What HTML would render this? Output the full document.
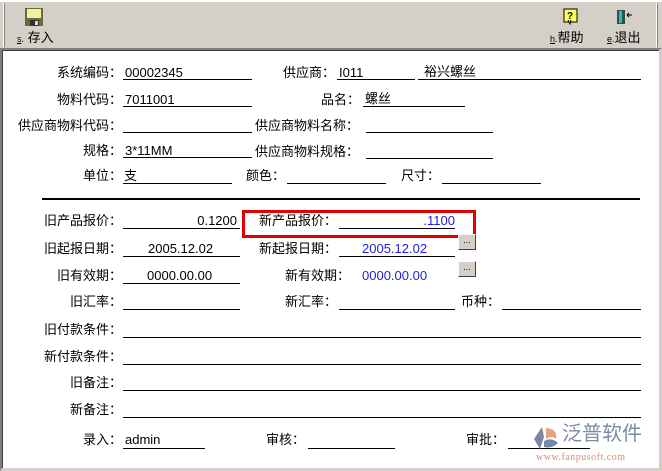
<!DOCTYPE html>
<html><head><meta charset="utf-8"><style>
*{margin:0;padding:0;box-sizing:border-box}
body{width:662px;height:471px;background:#d4d0c8;font:13px "Liberation Sans","Noto Sans CJK SC",sans-serif;color:#000;position:relative;overflow:hidden}
.a{position:absolute;white-space:nowrap;line-height:15px}
.l{position:absolute;height:1px;background:#000}
.b{color:#2020e0}
.btn{position:absolute;width:18px;height:16px;background:#d4d0c8;border:1px solid;border-color:#fff #404040 #404040 #fff;font-size:9px;text-align:center;line-height:10px}
</style></head><body>
<div style="position:absolute;left:0;top:0;width:662px;height:2px;background:#fff"></div>
<div style="position:absolute;left:3px;top:3px;width:2px;height:44px;border-left:1px solid #fff;border-right:1px solid #808080"></div>
<div style="position:absolute;left:656px;top:3px;width:2px;height:44px;border-left:1px solid #fff;border-right:1px solid #808080"></div>
<svg class="a" style="left:24px;top:7px" width="20" height="20"><rect x="1" y="1" width="18" height="18" fill="#6b6b3a"/><rect x="3" y="2" width="14" height="9" fill="#f0f0a0"/><rect x="6" y="13" width="9" height="6" fill="#333"/><rect x="11" y="14" width="3" height="4" fill="#ddd"/></svg>
<div class="a" style="left:17px;top:30px"><span style="font-size:9px;text-decoration:underline">s</span><span style="font-size:9px">.</span> 存入</div>
<svg class="a" style="left:563px;top:8px" width="16" height="18"><rect x="1" y="1" width="13" height="13" fill="#ffff60" stroke="#000"/><path d="M5 12l2 4 1-4" fill="#ffff60" stroke="#000"/><text x="4" y="11" font-size="10" font-weight="bold" fill="#000">?</text></svg>
<div class="a" style="left:550px;top:30px"><span style="font-size:9px;text-decoration:underline">h</span><span style="font-size:9px">.</span>帮助</div>
<svg class="a" style="left:616px;top:8px" width="18" height="18"><rect x="1" y="2" width="8" height="14" fill="#305050"/><rect x="3" y="3" width="3" height="12" fill="#20c0c0"/><path d="M11 7h5M11 7l2-2M11 7l2 2" stroke="#000"/></svg>
<div class="a" style="left:607px;top:30px"><span style="font-size:9px;text-decoration:underline">e</span><span style="font-size:9px">.</span>退出</div>
<div style="position:absolute;left:0;top:48px;width:662px;height:423px;background:#fff;border-top:2px solid #808080;border-left:2px solid #808080;border-bottom:3px solid #d4d0c8;border-right:3px solid #d4d0c8;box-shadow:inset 1px 1px 0 #404040"></div>

<div class="a" style="right:540px;top:65px">系统编码：</div><div class="a" style="left:125px;top:65px">00002345</div><div class="l" style="left:123px;top:79px;width:129px"></div>
<div class="a" style="right:327px;top:65px">供应商：</div><div class="a" style="left:339px;top:65px">I011</div><div class="l" style="left:337px;top:79px;width:78px"></div>
<div class="a" style="left:424px;top:64px">裕兴螺丝</div><div class="l" style="left:418px;top:79px;width:223px"></div>

<div class="a" style="right:540px;top:92px">物料代码：</div><div class="a" style="left:125px;top:92px">7011001</div><div class="l" style="left:123px;top:106px;width:129px"></div>
<div class="a" style="right:302px;top:92px">品名：</div><div class="a" style="left:365px;top:91px">螺丝</div><div class="l" style="left:363px;top:106px;width:102px"></div>

<div class="a" style="right:540px;top:118px">供应商物料代码：</div><div class="l" style="left:123px;top:132px;width:129px"></div>
<div class="a" style="left:255px;top:118px">供应商物料名称：</div><div class="l" style="left:366px;top:132px;width:127px"></div>

<div class="a" style="right:540px;top:143px">规格：</div><div class="a" style="left:125px;top:143px">3*11MM</div><div class="l" style="left:123px;top:157px;width:129px"></div>
<div class="a" style="left:255px;top:144px">供应商物料规格：</div><div class="l" style="left:366px;top:158px;width:127px"></div>

<div class="a" style="right:540px;top:168px">单位：</div><div class="a" style="left:124px;top:168px">支</div><div class="l" style="left:123px;top:183px;width:109px"></div>
<div class="a" style="right:377px;top:168px">颜色：</div><div class="l" style="left:287px;top:183px;width:99px"></div>
<div class="a" style="right:222px;top:168px">尺寸：</div><div class="l" style="left:442px;top:183px;width:99px"></div>

<div class="l" style="left:42px;top:198px;width:598px;height:2px"></div>

<div class="a" style="right:540px;top:213px">旧产品报价：</div><div class="a" style="right:425px;top:213px">0.1200</div><div class="l" style="left:123px;top:228px;width:117px"></div>
<div style="position:absolute;left:242px;top:210px;width:234px;height:28px;border:3px solid #e00000"></div>
<div class="a" style="right:325px;top:213px">新产品报价：</div><div class="a b" style="right:207px;top:213px">.1100</div><div class="l" style="left:339px;top:228px;width:116px"></div>

<div class="a" style="right:540px;top:241px">旧起报日期：</div><div class="a" style="left:148px;top:241px">2005.12.02</div><div class="l" style="left:123px;top:256px;width:117px"></div>
<div class="a" style="right:325px;top:241px">新起报日期：</div><div class="a b" style="left:362px;top:241px">2005.12.02</div><div class="l" style="left:339px;top:256px;width:116px"></div>
<div class="btn" style="left:458px;top:234px">...</div>

<div class="a" style="right:540px;top:268px">旧有效期：</div><div class="a" style="left:147px;top:268px">0000.00.00</div><div class="l" style="left:123px;top:283px;width:117px"></div>
<div class="a" style="right:312px;top:268px">新有效期：</div><div class="a b" style="left:362px;top:268px">0000.00.00</div>
<div class="btn" style="left:458px;top:261px">...</div>

<div class="a" style="right:540px;top:294px">旧汇率：</div><div class="l" style="left:123px;top:309px;width:117px"></div>
<div class="a" style="right:325px;top:294px">新汇率：</div><div class="l" style="left:339px;top:309px;width:116px"></div>
<div class="a" style="right:162px;top:294px">币种：</div><div class="l" style="left:502px;top:309px;width:139px"></div>

<div class="a" style="right:540px;top:322px">旧付款条件：</div><div class="l" style="left:123px;top:337px;width:518px"></div>
<div class="a" style="right:540px;top:349px">新付款条件：</div><div class="l" style="left:123px;top:364px;width:518px"></div>
<div class="a" style="right:540px;top:375px">旧备注：</div><div class="l" style="left:123px;top:390px;width:518px"></div>
<div class="a" style="right:540px;top:402px">新备注：</div><div class="l" style="left:123px;top:417px;width:518px"></div>

<div class="a" style="right:540px;top:432px">录入：</div><div class="a" style="left:125px;top:432px">admin</div><div class="l" style="left:123px;top:448px;width:82px"></div>
<div class="a" style="right:357px;top:432px">审核：</div><div class="l" style="left:308px;top:448px;width:87px"></div>
<div class="a" style="right:157px;top:432px">审批：</div><div class="l" style="left:508px;top:448px;width:82px"></div>

<svg class="a" style="left:532px;top:425px" width="30" height="26"><path d="M10 2 L2 14 L8 24 L12 12 Z" fill="#7a88a8"/><path d="M14 3 Q26 4 24 14 Q20 10 14 14 Z" fill="#e8a080"/><path d="M12 16 Q20 12 26 18 Q20 24 12 22Z" fill="#7a88a8"/></svg>
<div class="a" style="left:562px;top:422px;font-size:20px;line-height:24px;color:#7c8aa8">泛普软件</div>
<div class="a" style="left:536px;top:452px;font:10px 'Liberation Serif',serif;color:#e08a70;letter-spacing:0.5px">www.fanpusoft.com</div>
</body></html>
